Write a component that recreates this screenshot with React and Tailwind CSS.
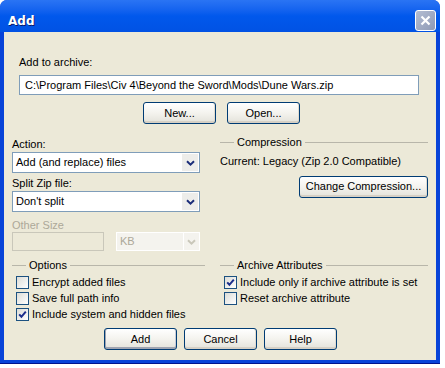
import React from "react";

const font = { fontFamily: '"Liberation Sans", Arial, sans-serif' };

const XpButton = ({ label, width = "w-[73px]", isDefault = false }) => (
  <button
    className={`${width} h-[22px] rounded-[3px] border border-[#003C74] bg-gradient-to-b from-white via-[#F4F3EE] to-[#E3E2DA] text-[11px] text-black leading-none ${
      isDefault
        ? "shadow-[inset_1px_0_0_#A0A4B0,inset_0_-2px_0_#A0A4B0,inset_-1px_0_0_#C8CCD6]"
        : "shadow-[inset_0_-2px_0_#D6D0C5,inset_-1px_0_0_#E0DCD0]"
    }`}
  >
    {label}
  </button>
);

const Chevron = ({ disabled }) => (
  <svg width="9" height="6" viewBox="0 0 9 6">
    <path
      d="M1 1.2 L4.5 4.6 L8 1.2"
      fill="none"
      stroke={disabled ? "#C9C7BA" : "#1C2E7A"}
      strokeWidth="2"
    />
  </svg>
);

const Select = ({ value }) => (
  <div className="w-full h-[21px] border border-[#7F9DB9] bg-white flex items-center">
    <span className="flex-1 pl-[3px] text-[11px] leading-none">{value}</span>
    <div className="w-[16px] h-[17px] mr-[1px] bg-[#EDEDEA] flex items-center justify-center">
      <Chevron />
    </div>
  </div>
);

const GroupHeader = ({ title }) => (
  <div className="flex items-center h-[14px]">
    <div className="w-[14px] h-px bg-[#B8B6AA]" />
    <span className="px-[3px] text-[11px] leading-none">{title}</span>
    <div className="flex-1 h-px bg-[#B8B6AA]" />
  </div>
);

const Check = ({ label, checked }) => (
  <div className="flex items-center h-[16px] pl-[4px]">
    <div className="w-[13px] h-[13px] border border-[#1C5180] bg-gradient-to-br from-[#DCDCD7] to-white flex items-center justify-center">
      {checked && (
        <svg width="9" height="9" viewBox="0 0 9 9">
          <path d="M1.2 4.4 L3.4 6.8 L7.8 1.6" fill="none" stroke="#1C2E8C" strokeWidth="2" />
        </svg>
      )}
    </div>
    <span className="pl-[3px] text-[11px] leading-none">{label}</span>
  </div>
);

export default function App() {
  return (
    <div className="w-[445px] h-[368px] bg-white" style={font}>
      <div className="w-[440px] h-[364px] flex flex-col rounded-t-[7px] overflow-hidden bg-[#0843D8] border-b border-[#00138C]">
        <div className="h-[32px] shrink-0 flex items-center pt-[9px] pl-[8px] pr-[4px] bg-gradient-to-b from-[#2A74F4] via-[#0158EC] to-[#0152E4]">
          <span
            className="flex-1 text-white font-bold text-[12px] leading-none [text-shadow:1px_1px_0_#0A1A6B]"
            style={{ fontFamily: '"DejaVu Sans", sans-serif' }}
          >
            Add
          </span>
          <div className="w-[21px] h-[21px] rounded-[3px] border border-white bg-gradient-to-br from-[#B4BDD2] to-[#8E9AB6] flex items-center justify-center">
            <svg width="11" height="11" viewBox="0 0 11 11">
              <path d="M1.5 1.5 L9.5 9.5 M9.5 1.5 L1.5 9.5" stroke="white" strokeWidth="2.2" />
            </svg>
          </div>
        </div>

        <div className="flex-1 mx-[4px] mb-[3px] bg-[#ECE9D8] flex flex-col text-black">
          <div className="pl-[15px] mt-[23px] h-[14px] text-[11px] leading-[14px]">Add to archive:</div>
          <div className="ml-[15px] mt-[6px] w-[400px] h-[20px] border border-[#7F9DB9] bg-white flex items-center pl-[5px] text-[11px] leading-none">
            C:\Program Files\Civ 4\Beyond the Sword\Mods\Dune Wars.zip
          </div>
          <div className="mt-[7px] flex justify-center gap-[11px] pl-[3px]">
            <XpButton label="New..." />
            <XpButton label="Open..." />
          </div>

          <div className="mt-[13px] flex pl-[8px] gap-[20px]">
            <div className="w-[188px] flex flex-col">
              <div className="h-[14px] text-[11px] leading-[14px]">Action:</div>
              <div className="mt-[1px]">
                <Select value="Add (and replace) files" />
              </div>
              <div className="mt-[3px] h-[14px] text-[11px] leading-[14px]">Split Zip file:</div>
              <div className="mt-[1px]">
                <Select value="Don't split" />
              </div>
              <div className="mt-[6px] h-[14px] text-[11px] leading-[14px] text-[#ACA899]">Other Size</div>
              <div className="flex gap-[12px]">
                <div className="w-[92px] h-[19px] border border-[#C9C7BA] bg-[#ECE9D8]" />
                <div className="w-[84px] h-[19px] border border-white bg-[#F4F3EE] flex items-center">
                  <span className="flex-1 pl-[3px] text-[11px] leading-none text-[#ACA899]">KB</span>
                  <div className="w-[16px] h-[17px] border-l border-white bg-[#F4F3EE] flex items-center justify-center">
                    <Chevron disabled />
                  </div>
                </div>
              </div>
            </div>

            <div className="w-[208px] flex flex-col -mt-[2px]">
              <GroupHeader title="Compression" />
              <div className="mt-[5px] h-[14px] text-[11px] leading-[14px]">Current: Legacy (Zip 2.0 Compatible)</div>
              <div className="mt-[5px] self-end">
                <XpButton label="Change Compression..." width="w-[129px]" />
              </div>
            </div>
          </div>

          <div className="mt-[7px] flex pl-[8px] gap-[15px]">
            <div className="w-[193px] flex flex-col">
              <GroupHeader title="Options" />
              <div className="mt-[2px] flex flex-col">
                <Check label="Encrypt added files" />
                <Check label="Save full path info" />
                <Check label="Include system and hidden files" checked />
              </div>
            </div>
            <div className="w-[208px] flex flex-col">
              <GroupHeader title="Archive Attributes" />
              <div className="mt-[2px] flex flex-col">
                <Check label="Include only if archive attribute is set" checked />
                <Check label="Reset archive attribute" />
              </div>
            </div>
          </div>

          <div className="mt-[6px] flex justify-center gap-[7px] pl-[1px]">
            <XpButton label="Add" isDefault />
            <XpButton label="Cancel" />
            <XpButton label="Help" />
          </div>
        </div>
      </div>
    </div>
  );
}
